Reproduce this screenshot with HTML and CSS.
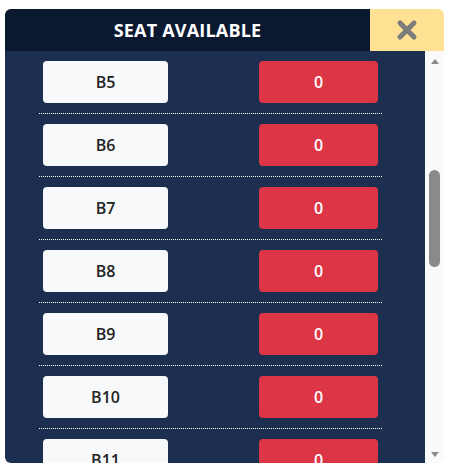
FILE: index.html
```html
<!DOCTYPE html>
<html>
<head>
<meta charset="utf-8">
<link rel="stylesheet" href="styles.css">
</head>
<body>
<div class="panel">
  <div class="header">
    <div class="title">SEAT AVAILABLE</div>
    <button class="close" aria-label="Close">
      <svg width="22" height="22" viewBox="0 0 22 22"><path d="M4 4 L18 18 M18 4 L4 18" stroke="#7c7c7c" stroke-width="5" stroke-linecap="round"/></svg>
    </button>
  </div>
  <div class="body">
    <div class="list">
      <div class="row"><div class="seat">B5</div><div class="count">0</div></div>
      <div class="row"><div class="seat">B6</div><div class="count">0</div></div>
      <div class="row"><div class="seat">B7</div><div class="count">0</div></div>
      <div class="row"><div class="seat">B8</div><div class="count">0</div></div>
      <div class="row"><div class="seat">B9</div><div class="count">0</div></div>
      <div class="row"><div class="seat">B10</div><div class="count">0</div></div>
      <div class="row"><div class="seat">B11</div><div class="count">0</div></div>
    </div>
    <div class="scrollbar">
      <div class="arrow up"></div>
      <div class="track"><div class="thumb"></div></div>
      <div class="arrow down"></div>
    </div>
  </div>
</div>
</body>
</html>
```
FILE: styles.css
```css
html, body { margin: 0; padding: 0; background: #fff; }
body { padding: 9px 8px 9px 5px; font-family: "Open Sans", "Noto Sans", sans-serif; }
.panel {
  width: 439px;
  height: 454px;
  border-radius: 6px;
  overflow: hidden;
  display: flex;
  flex-direction: column;
  background: #fafafa;
}
.header { display: flex; height: 42px; flex: none; }
.title {
  flex: 1;
  background: #0a1830;
  color: #fff;
  font-weight: 700;
  font-size: 18px;
  letter-spacing: 0.2px;
  display: flex;
  align-items: center;
  justify-content: center;
}
.close {
  width: 74px;
  border: 0;
  background: #ffe194;
  display: flex;
  align-items: center;
  justify-content: center;
  padding: 0;
}
.body { flex: 1; display: flex; min-height: 0; }
.list {
  flex: 1;
  overflow: hidden;
  background: #1c2f50;
}
.row {
  margin: 0 43px 0 34px;
  padding: 10px 4px;
  display: flex;
  justify-content: space-between;
  border-bottom: 1px dotted #fff;
}
.seat, .count {
  height: 42px;
  border-radius: 4px;
  display: flex;
  align-items: center;
  justify-content: center;
  font-weight: 600;
  font-size: 16px;
}
.seat { width: 125px; background: #f8f9fa; color: #222; }
.count { width: 119px; background: #dc3545; color: #fff; }
.scrollbar {
  width: 19px;
  flex: none;
  background: #fafafa;
  display: flex;
  flex-direction: column;
  align-items: center;
  padding: 8px 0 6px;
}
.arrow { width: 0; height: 0; border-left: 4px solid transparent; border-right: 4px solid transparent; flex: none; }
.arrow.up { border-bottom: 5px solid #8a8a8a; }
.arrow.down { border-top: 5px solid #8a8a8a; }
.track { flex: 1; width: 100%; display: flex; justify-content: center; }
.thumb { margin-top: 106px; width: 11px; height: 97px; border-radius: 6px; background: #8a8a8a; }
```
